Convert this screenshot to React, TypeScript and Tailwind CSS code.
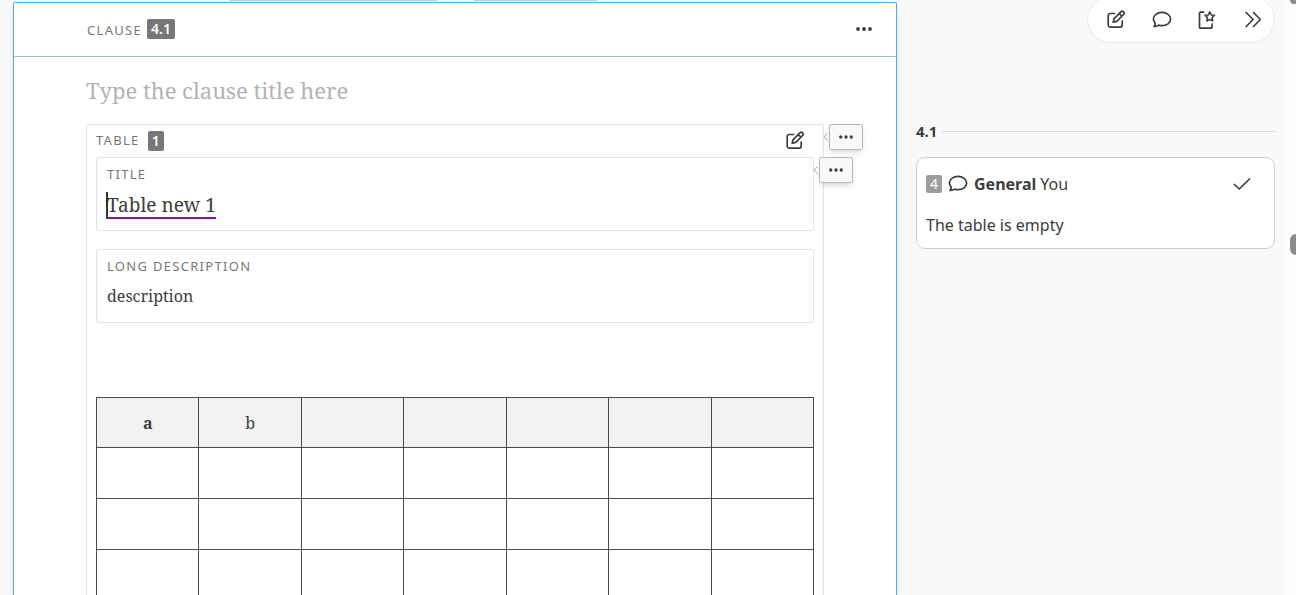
import { ReactNode } from "react";

const columns = ["a", "b", "", "", "", "", ""];
const rows = [1, 2, 3, 4];

const Icon = ({ children }: { children: ReactNode }) => (
  <svg
    viewBox="0 0 20 20"
    className="size-5 shrink-0"
    fill="none"
    stroke="currentColor"
    strokeWidth="1.7"
    strokeLinecap="round"
    strokeLinejoin="round"
    aria-hidden="true"
  >
    {children}
  </svg>
);

const EditIcon = () => (
  <Icon>
    <path d="M8.5 3.5H4.2A2 2 0 0 0 2.2 5.5V15.1A2 2 0 0 0 4.2 17.1H14.2A2 2 0 0 0 16.2 15.1V11" />
    <path d="M7.2 12.3L8 8.8L14.8 1.9A1.8 1.8 0 0 1 17.6 4.5L10.8 11.4ZM13.2 3.6L15.9 6.2" />
  </Icon>
);

const CommentIcon = () => (
  <Icon>
    <path d="M2 16.5C3 15.3 3.4 14.3 3.2 13.2C2 11.9 1.4 10.7 1.4 9.1C1.4 5.3 5.2 2.4 10 2.4S18.6 5.3 18.6 9.1S14.8 15.7 10 15.7C8.8 15.7 7.7 15.5 6.6 15.1C5.3 16 3.7 16.5 2 16.5Z" />
  </Icon>
);

const NoteStarIcon = () => (
  <Icon>
    <path d="M6.5 2.2H3.5A1 1 0 0 0 2.5 3.2V17.2A1 1 0 0 0 3.5 18.2H14A1 1 0 0 0 15 17.2V14.2" />
    <path
      strokeWidth="1.5"
      d="M12.8 1.9L14.2 4.9L17.6 5.3L15.1 7.6L15.8 11L12.8 9.4L9.8 11L10.5 7.6L8 5.3L11.4 4.9Z"
    />
  </Icon>
);

const DoubleChevronIcon = () => (
  <Icon>
    <path d="M3.2 2.5L10 9.5L3.2 16.5M10.5 2.5L17.3 9.5L10.5 16.5" />
  </Icon>
);

const CheckIcon = () => (
  <Icon>
    <path d="M2.5 10.5L7.2 15L17.5 5" />
  </Icon>
);

const DotsIcon = ({ className }: { className: string }) => (
  <svg viewBox="0 0 16 4" className={className} fill="currentColor" aria-hidden="true">
    <circle cx="2" cy="2" r="1.9" />
    <circle cx="8" cy="2" r="1.9" />
    <circle cx="14" cy="2" r="1.9" />
  </svg>
);

// menu button that hangs off the right edge of a block
const BlockMenu = ({ label }: { label: string }) => (
  <div className="absolute -top-px left-full z-10 flex items-center gap-px">
    <svg viewBox="0 0 5 8" className="h-2 w-[5px]" fill="none" stroke="#a3a3a3" aria-hidden="true">
      <path d="M4.5 0.5L0.8 4L4.5 7.5" />
    </svg>
    <button
      aria-label={label}
      className="flex h-[26px] w-[34px] items-center justify-center rounded-xs border border-[#b4b8b8] bg-[#f8faf9] shadow-md"
    >
      <DotsIcon className="h-1 w-[14px]" />
    </button>
  </div>
);

const Field = ({ id, label, children }: { id: string; label: string; children: ReactNode }) => (
  <div className="relative h-[74px] rounded-xs border border-[#e1e3e4] px-[10px] pt-[7px]">
    <label htmlFor={id} className="block text-[13px] leading-[18px] tracking-widest text-[#777]">
      {label}
    </label>
    {children}
  </div>
);

const Editor = () => (
  <main className="flex-1 overflow-hidden rounded-t-xs border border-b-0 border-[#4dabf7] bg-white shadow-md">
    <header className="flex h-[54px] items-center justify-between border-b border-[#a9bccb] pr-6 pb-px pl-[73px]">
      <div className="flex items-end gap-[5px] text-[13px] leading-[18px] tracking-widest text-[#777]">
        CLAUSE
        <span className="rounded-xs bg-[#777] px-1 text-sm leading-5 font-semibold tracking-normal text-white">4.1</span>
      </div>
      <button aria-label="Clause menu">
        <DotsIcon className="h-1 w-4" />
      </button>
    </header>
    <div className="px-[72px] pt-[17px]">
      <input
        aria-label="Clause title"
        placeholder="Type the clause title here"
        className="block h-8 w-full font-['Noto_Serif','DejaVu_Serif',serif] text-[22px] outline-none placeholder:text-[#b3b3b3]"
      />
      <section className="relative mt-[18px] rounded-xs border border-[#e1e3e4] px-[9px] pb-4">
        <BlockMenu label="Table menu" />
        <div className="flex h-8 items-center justify-between pr-[9px]">
          <div className="flex items-center gap-2 text-[13px] tracking-widest text-[#777]">
            TABLE
            <span className="rounded-xs bg-[#777] px-1 text-sm leading-5 font-semibold tracking-normal text-white">1</span>
          </div>
          <button aria-label="Edit table">
            <EditIcon />
          </button>
        </div>
        <Field id="table-title" label="TITLE">
          <BlockMenu label="Title menu" />
          <div className="mt-[9px] flex">
            <span className="-mx-px h-[27px] w-0.5 bg-[#333]" />
            <input
              id="table-title"
              defaultValue="Table new 1"
              className="field-sizing-content h-[27px] border-b-2 border-[#86198f] pt-0.5 font-['Noto_Serif','DejaVu_Serif',serif] text-[19px] outline-none"
            />
          </div>
        </Field>
        <div className="mt-[18px]">
          <Field id="table-description" label="LONG DESCRIPTION">
            <input
              id="table-description"
              defaultValue="description"
              className="mt-[9px] block h-6 w-full font-['Noto_Serif','DejaVu_Serif',serif] text-base outline-none"
            />
          </Field>
        </div>
        <table className="mt-[74px] w-full table-fixed border-collapse font-['Noto_Serif','DejaVu_Serif',serif] text-base">
          <thead>
            <tr className="h-[50px] bg-[#f2f2f2]">
              {columns.map((name, i) => (
                <th key={i} className={`border border-[#4a4a4a] ${i === 0 ? "font-bold" : "font-normal"}`}>
                  {name}
                </th>
              ))}
            </tr>
          </thead>
          <tbody>
            {rows.map((row) => (
              <tr key={row} className="h-[51px]">
                {columns.map((_, i) => (
                  <td key={i} className="border border-[#4a4a4a]" />
                ))}
              </tr>
            ))}
          </tbody>
        </table>
      </section>
    </div>
  </main>
);

const Comments = () => (
  <aside className="flex w-[389px] shrink-0 flex-col pr-[11px] pl-[19px]">
    <div className="-mt-1 flex h-[47px] w-[188px] shrink-0 items-center justify-between self-end rounded-full border border-[#e3e8eb] bg-white pr-[11px] pl-[18px]">
      <button aria-label="Edit"><EditIcon /></button>
      <button aria-label="Comments"><CommentIcon /></button>
      <button aria-label="Bookmarks"><NoteStarIcon /></button>
      <button aria-label="Collapse panel"><DoubleChevronIcon /></button>
    </div>
    <div className="mt-[76px] flex items-center gap-[5px]">
      <h2 className="text-[15px] leading-6 font-bold">4.1</h2>
      <div className="h-px flex-1 bg-[#d6dadc]" />
    </div>
    <article className="mt-[14px] rounded-[9px] border border-[#c8d2d6] bg-white px-[9px] pt-[14px] pb-[11px]">
      <div className="flex h-6 items-center">
        <span className="rounded-xs bg-[#9e9e9e] px-1 text-sm leading-[18px] text-white">4</span>
        <span className="mx-1.5"><CommentIcon /></span>
        <span className="text-base font-bold">General</span>
        <span className="ml-1 text-base">You</span>
        <button aria-label="Resolve" className="mr-[13px] ml-auto">
          <CheckIcon />
        </button>
      </div>
      <p className="mt-[17px] text-base leading-6">The table is empty</p>
    </article>
  </aside>
);

const App = () => {
  return (
    <div className="flex h-screen overflow-hidden bg-[#f9f9f9] font-['Noto_Sans',sans-serif] text-[#3d3d3d]">
      <div className="flex min-w-0 flex-1 flex-col pl-[13px]">
        <div className="flex h-0.5 shrink-0 gap-[37px] pl-[216px]">
          <div className="h-px w-[208px] bg-[#c3ccd3]" />
          <div className="h-px w-[123px] bg-[#c3ccd3]" />
        </div>
        <Editor />
      </div>
      <Comments />
      <div className="flex w-[10px] shrink-0 flex-col items-end bg-[#fcfcfc]">
        <div className="h-1 w-1.5 rounded-bl-full bg-[#8b8b8b]" />
        <div className="mt-[230px] h-[21px] w-1.5 rounded-l-md bg-[#8b8b8b]" />
      </div>
    </div>
  );
};

export default App;
